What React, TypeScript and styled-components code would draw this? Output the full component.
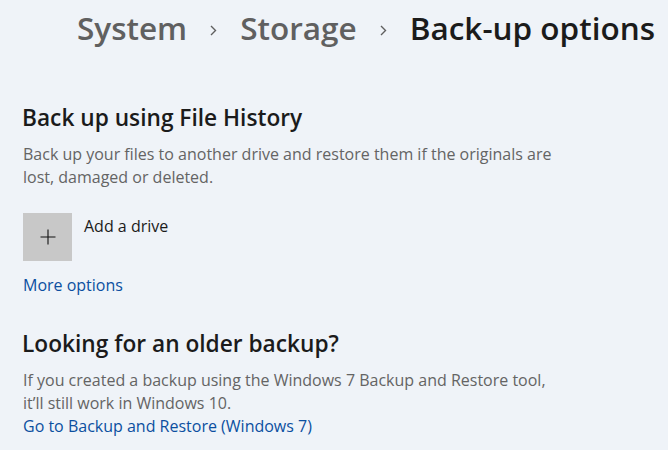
import React from "react";
import styled, { createGlobalStyle } from "styled-components";

const Global = createGlobalStyle`
  html, body { margin: 0; padding: 0; background: #eff3f8; }
  body { font-family: "Open Sans", "Noto Sans", sans-serif; -webkit-font-smoothing: antialiased; }
`;

const Page = styled.div`
  width: 668px;
  height: 450px;
  overflow: hidden;
  background: #eff3f8;
  box-sizing: border-box;
  padding: 0 0 0 22px;
`;

const Breadcrumb = styled.div`
  display: flex;
  align-items: center;
  height: 56px;
  padding-left: 55px;
  white-space: nowrap;
`;

const Crumb = styled.span<{ $current?: boolean }>`
  font-size: 31.5px;
  font-weight: 600;
  color: ${(p) => (p.$current ? "#1b1b1b" : "#606060")};
  line-height: 1;
`;

const Sep = styled.span`
  display: flex;
  align-items: center;
  margin: 4px 23px 0 22px;
`;

const Section = styled.section<{ $top: number }>`
  margin-top: ${(p) => p.$top}px;
`;

const Heading = styled.h2`
  margin: 0;
  font-size: 22.7px;
  font-weight: 600;
  color: #1b1b1b;
  line-height: 28px;
`;

const Body = styled.p`
  margin: 11px 0 0 1px;
  font-size: 16px;
  line-height: 23px;
  color: #646464;
  width: 540px;
`;

const DriveRow = styled.div`
  display: flex;
  align-items: flex-start;
  gap: 12px;
  margin: 24px 0 0 1px;
`;

const DriveButton = styled.button`
  width: 49px;
  height: 48px;
  border: none;
  padding: 0;
  background: #c8c8c8;
  display: flex;
  align-items: center;
  justify-content: center;
  cursor: pointer;
`;

const DriveLabel = styled.span`
  font-size: 16px;
  color: #1b1b1b;
  line-height: 20px;
  margin-top: 3px;
`;

const Link = styled.a<{ $top: number }>`
  display: block;
  margin: ${(p) => p.$top}px 0 0 1px;
  font-size: 16px;
  line-height: 23px;
  color: #0b4fa0;
  text-decoration: none;
  cursor: pointer;
`;

const Chevron = () => (
  <svg width="8" height="11" viewBox="0 0 8 11">
    <path d="M2 1 L6.5 5.5 L2 10" fill="none" stroke="#5f5f5f" strokeWidth="1.4" />
  </svg>
);

const Plus = () => (
  <svg width="16" height="16" viewBox="0 0 16 16">
    <path d="M8 0.5 V15.5 M0.5 8 H15.5" stroke="#111" strokeWidth="1.1" />
  </svg>
);

export default function App() {
  return (
    <Page>
      <Global />
      <Breadcrumb>
        <Crumb>System</Crumb>
        <Sep><Chevron /></Sep>
        <Crumb>Storage</Crumb>
        <Sep><Chevron /></Sep>
        <Crumb $current>Back-up options</Crumb>
      </Breadcrumb>
      <Section $top={48}>
        <Heading>Back up using File History</Heading>
        <Body>
          Back up your files to another drive and restore them if the originals are lost, damaged or deleted.
        </Body>
        <DriveRow>
          <DriveButton aria-label="Add a drive"><Plus /></DriveButton>
          <DriveLabel>Add a drive</DriveLabel>
        </DriveRow>
        <Link $top={13}>More options</Link>
      </Section>
      <Section $top={33}>
        <Heading>Looking for an older backup?</Heading>
        <Body>
          If you created a backup using the Windows 7 Backup and Restore tool, it’ll still work in Windows 10.
        </Body>
        <Link $top={0}>Go to Backup and Restore (Windows 7)</Link>
      </Section>
    </Page>
  );
}
